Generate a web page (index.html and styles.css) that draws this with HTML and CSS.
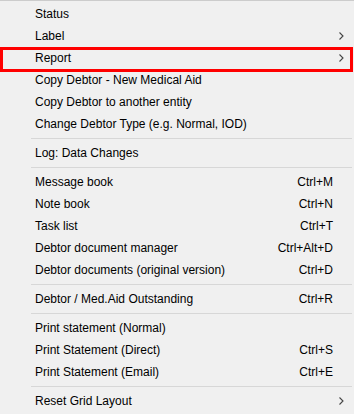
FILE: index.html
```html
<!DOCTYPE html>
<html lang="en">
<head>
  <meta charset="UTF-8" />
  <title>Debtor menu</title>
  <link rel="stylesheet" href="styles.css">
</head>
<body>
  <div class="menu">
    <div class="item"><span class="label">Status</span></div>
    <div class="item"><span class="label">Label</span><span class="arrow"><svg width="5" height="8" viewBox="0 0 5 8"><path d="M0.5 0.5 L4 4 L0.5 7.5" fill="none" stroke="#444" stroke-width="1.1"/></svg></span></div>
    <div class="item"><span class="label">Report</span><span class="arrow"><svg width="5" height="8" viewBox="0 0 5 8"><path d="M0.5 0.5 L4 4 L0.5 7.5" fill="none" stroke="#444" stroke-width="1.1"/></svg></span></div>
    <div class="item"><span class="label">Copy Debtor - New Medical Aid</span></div>
    <div class="item"><span class="label">Copy Debtor to another entity</span></div>
    <div class="item"><span class="label">Change Debtor Type (e.g. Normal, IOD)</span></div>
    <div class="sep"></div>
    <div class="item"><span class="label">Log: Data Changes</span></div>
    <div class="sep"></div>
    <div class="item"><span class="label">Message book</span><span class="key">Ctrl+M</span></div>
    <div class="item"><span class="label">Note book</span><span class="key">Ctrl+N</span></div>
    <div class="item"><span class="label">Task list</span><span class="key">Ctrl+T</span></div>
    <div class="item"><span class="label">Debtor document manager</span><span class="key">Ctrl+Alt+D</span></div>
    <div class="item"><span class="label">Debtor documents (original version)</span><span class="key">Ctrl+D</span></div>
    <div class="sep"></div>
    <div class="item"><span class="label">Debtor / Med.Aid Outstanding</span><span class="key">Ctrl+R</span></div>
    <div class="sep"></div>
    <div class="item"><span class="label">Print statement (Normal)</span></div>
    <div class="item"><span class="label">Print Statement (Direct)</span><span class="key">Ctrl+S</span></div>
    <div class="item"><span class="label">Print Statement (Email)</span><span class="key">Ctrl+E</span></div>
    <div class="sep"></div>
    <div class="item"><span class="label">Reset Grid Layout</span><span class="arrow"><svg width="5" height="8" viewBox="0 0 5 8"><path d="M0.5 0.5 L4 4 L0.5 7.5" fill="none" stroke="#444" stroke-width="1.1"/></svg></span></div>

    <!-- highlight box drawn over the Report row -->
    <div class="highlight"></div>
  </div>
</body>
</html>
```

FILE: styles.css
```css
html, body {
  margin: 0;
  padding: 0;
  background-color: #f0f0f0;
}
.menu {
  position: relative;
  width: 354px;
  height: 414px;
  box-sizing: border-box;
  padding-top: 2px;
  background-color: #f0f0f0;
  border-top: 1px solid #cccccc;
  font-family: "Liberation Sans", Arial, sans-serif;
  font-size: 12px;
  color: #000;
  overflow: hidden;
}
.item {
  display: flex;
  align-items: center;
  height: 22px;
  padding-left: 35px;
  padding-right: 21px;
}
.label {
  flex: 1;
  white-space: nowrap;
}
.key {
  white-space: nowrap;
}
.arrow {
  display: flex;
  align-items: center;
  margin-right: -11px;
}
.sep {
  height: 7px;
  display: flex;
  align-items: center;
  padding-left: 31px;
  padding-right: 2px;
}
.sep::before {
  content: "";
  flex: 1;
  height: 1px;
  background-color: #d7d7d7;
}
/* red box over Report */
.highlight {
  position: absolute;
  top: 46px;
  left: 0;
  width: 353px;
  height: 25px;
  box-sizing: border-box;
  border: 3px solid #ff0000;
}
```
